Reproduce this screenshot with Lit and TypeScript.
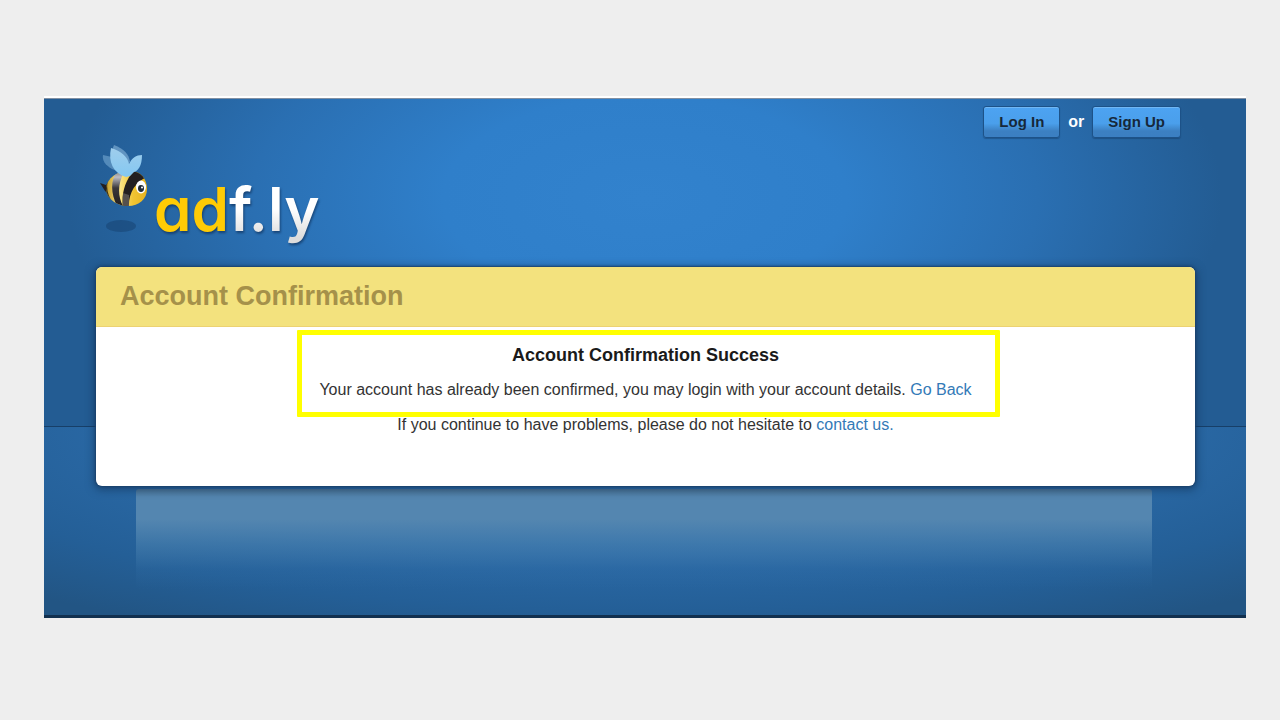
import { LitElement, html, css } from "lit";
import { customElement } from "lit/decorators.js";

@customElement("adfly-logo")
class AdflyLogo extends LitElement {
  static styles = css`
    :host {
      display: block;
    }
    .logo {
      display: flex;
      align-items: flex-start;
      gap: 4px;
      color: #fff;
      text-decoration: none;
    }
    .bee {
      display: block;
      flex: none;
    }
    .word {
      padding-top: 24px;
      font: 600 60px/80px Inter, "Liberation Sans", sans-serif;
      font-feature-settings: "cv11" 1, "ss03" 1;
      filter: drop-shadow(1px 2px 1px rgba(10, 40, 80, 0.6));
    }
    .ad {
      color: #ffcb05;
    }
    .fly {
      color: transparent;
      background: linear-gradient(#fff 50%, #dcdcdc 90%);
      -webkit-background-clip: text;
      background-clip: text;
    }
  `;

  render() {
    return html`
      <a class="logo" href="#">
        <svg class="bee" width="50" height="90" viewBox="0 0 50 90" aria-hidden="true">
          <defs>
            <linearGradient id="body" x1="0" x2="1">
              <stop offset="0" stop-color="#c39a22" />
              <stop offset="0.35" stop-color="#fbe588" />
              <stop offset="0.65" stop-color="#f0c433" />
              <stop offset="1" stop-color="#e6b11c" />
            </linearGradient>
            <linearGradient id="stripe" x1="0" y1="0" x2="0" y2="1">
              <stop offset="0" stop-color="#77757a" />
              <stop offset="0.2" stop-color="#bcbcc2" />
              <stop offset="0.5" stop-color="#3a373a" />
              <stop offset="1" stop-color="#231f20" />
            </linearGradient>
            <linearGradient id="wing" x1="0" y1="0" x2="0" y2="1">
              <stop offset="0" stop-color="#9fcdec" />
              <stop offset="1" stop-color="#84c8f2" />
            </linearGradient>
            <clipPath id="shape">
              <path d="M6 43C7 33 17 26 30 26C41 26 47 34 47 44C47 54 39 61 28 61C16 61 6 53 6 43Z" />
            </clipPath>
          </defs>
          <ellipse cx="21" cy="81" rx="15" ry="6" fill="#153f6e" opacity=".5" />
          <path d="M0 38L6 40L11 34V51L5 46Z" fill="#231f20" />
          <g clip-path="url(#shape)">
            <rect x="5" y="25" width="43" height="38" fill="url(#body)" />
            <path d="M10 30C5 40 7 50 13 58L8 58L4 44Z" fill="#3a3018" />
            <path d="M17 26C10 36 11 49 17 61L23 61C17 49 18 38 25 25Z" fill="url(#stripe)" />
            <path d="M36 24C25 34 21 49 23 63L29 63C28 49 35 37 47 32L44 24Z" fill="#231f20" />
            <path d="M23 48L29 50V61H23Z" fill="#77726c" opacity=".6" />
          </g>
          <path d="M12 24C5 20 2 15 3 10L12 12L20 27Z" fill="#83b6dc" opacity=".5" />
          <path d="M14 0C24 4 29 9 30 17L25 22L11 8Z" fill="#9dc8e8" opacity=".5" />
          <path d="M26 32C13 28 8 17 11 3C21 6 28 12 29 19C32 13 36 10 42 10C42 21 38 26 34 27L30 31Z" fill="url(#wing)" />
          <ellipse cx="41" cy="42" rx="5" ry="6.4" fill="#fff" />
          <ellipse cx="41" cy="43.500" rx="3" ry="3.4" fill="#222b36" />
          <circle cx="42" cy="42.500" r="1" fill="#fff" />
        </svg>
        <span class="word"><span class="ad">ad</span><span class="fly">f.ly</span></span>
      </a>
    `;
  }
}

@customElement("app-root")
class AppRoot extends LitElement {
  static styles = css`
    :host {
      display: block;
      box-sizing: border-box;
      min-height: 100vh;
      padding: 96px 34px 96px 44px;
      background: #eee;
      font: 16px/20px "Liberation Sans", Arial, sans-serif;
      color: #333;
    }
    .site {
      border-top: 2px solid #fff;
      border-bottom: 3px solid #12304f;
      background:
        linear-gradient(#173f68, #173f68) 0 calc(100% - 188px) / 100% 1px no-repeat,
        radial-gradient(ellipse 75% 230px at 50% 0, #2c76bb, #2a69a6 55%, #245f97 80%, #225584) bottom / 100% 188px no-repeat,
        radial-gradient(ellipse 48% 290px at 50% 100px, #3282cd 0, #2f7fca 35%, #2a6fb2 68%, #235c93 100%);
    }
    .site::before {
      content: "";
      display: block;
      height: 1px;
      background: #8190a3;
    }
    header {
      display: flex;
      justify-content: space-between;
      align-items: flex-start;
      height: 168px;
      padding: 0 65px 0 56px;
      box-sizing: border-box;
    }
    adfly-logo {
      padding-top: 46px;
    }
    nav {
      display: flex;
      align-items: center;
      gap: 8px;
      padding-top: 7px;
      color: #fff;
      font-weight: bold;
    }
    button {
      box-sizing: border-box;
      height: 32px;
      padding: 0 15px;
      border: 1px solid #1d5288;
      border-radius: 3px;
      background: linear-gradient(#4da3f2 0, #4a9feb 55%, #3c80c2 80%, #3b7fc2);
      box-shadow: inset 0 1px #70b7f5, 0 1px 1px rgba(15, 50, 90, 0.4);
      color: #16283a;
      font: bold 15px/20px "Liberation Sans", Arial, sans-serif;
    }
    .card {
      position: relative;
      margin: 0 51px 0 52px;
      border-radius: 6px;
      background: #fff;
      box-shadow: 0 0 2px 1px #1b426c, 0 2px 8px 2px rgba(15, 45, 80, 0.55);
      text-align: center;
    }
    h1 {
      margin: 0;
      padding: 14px 24px;
      border-bottom: 1px solid #ecd272;
      border-radius: 6px 6px 0 0;
      background: #f3e27e;
      color: #a5914a;
      font-size: 27px;
      line-height: 31px;
      text-align: left;
    }
    .content {
      padding: 18px 24px 51px;
    }
    .result {
      position: relative;
      width: fit-content;
      margin: 0 auto;
    }
    .result::after {
      content: "";
      position: absolute;
      inset: -15px -28px -17px -22px;
      border: 5px solid #ff0;
      border-radius: 1px;
      pointer-events: none;
    }
    h2 {
      margin: 0 0 15px;
      color: #1a1a1a;
      font-size: 18px;
      line-height: 20px;
    }
    p {
      margin: 0;
    }
    .help {
      margin-top: 15px;
    }
    .content a {
      color: #337ab7;
      text-decoration: none;
    }
    footer {
      height: 129px;
      padding: 3px 94px 0 92px;
      box-sizing: border-box;
    }
    .panel {
      height: 100px;
      border-radius: 3px 3px 0 0;
      background: linear-gradient(#4d7596, #5486b0 8px, #5486b0 30%, rgba(75, 130, 175, 0.6) 55%, rgba(55, 115, 170, 0.2) 80%, transparent);
    }
  `;

  render() {
    return html`
      <div class="site">
        <header>
          <adfly-logo></adfly-logo>
          <nav>
            <button type="button">Log In</button>
            <span>or</span>
            <button type="button">Sign Up</button>
          </nav>
        </header>
        <main class="card">
          <h1>Account Confirmation</h1>
          <div class="content">
            <div class="result">
              <h2>Account Confirmation Success</h2>
              <p>Your account has already been confirmed, you may login with your account details. <a href="#">Go Back</a></p>
            </div>
            <p class="help">If you continue to have problems, please do not hesitate to <a href="#">contact us.</a></p>
          </div>
        </main>
        <footer><div class="panel"></div></footer>
      </div>
    `;
  }
}
